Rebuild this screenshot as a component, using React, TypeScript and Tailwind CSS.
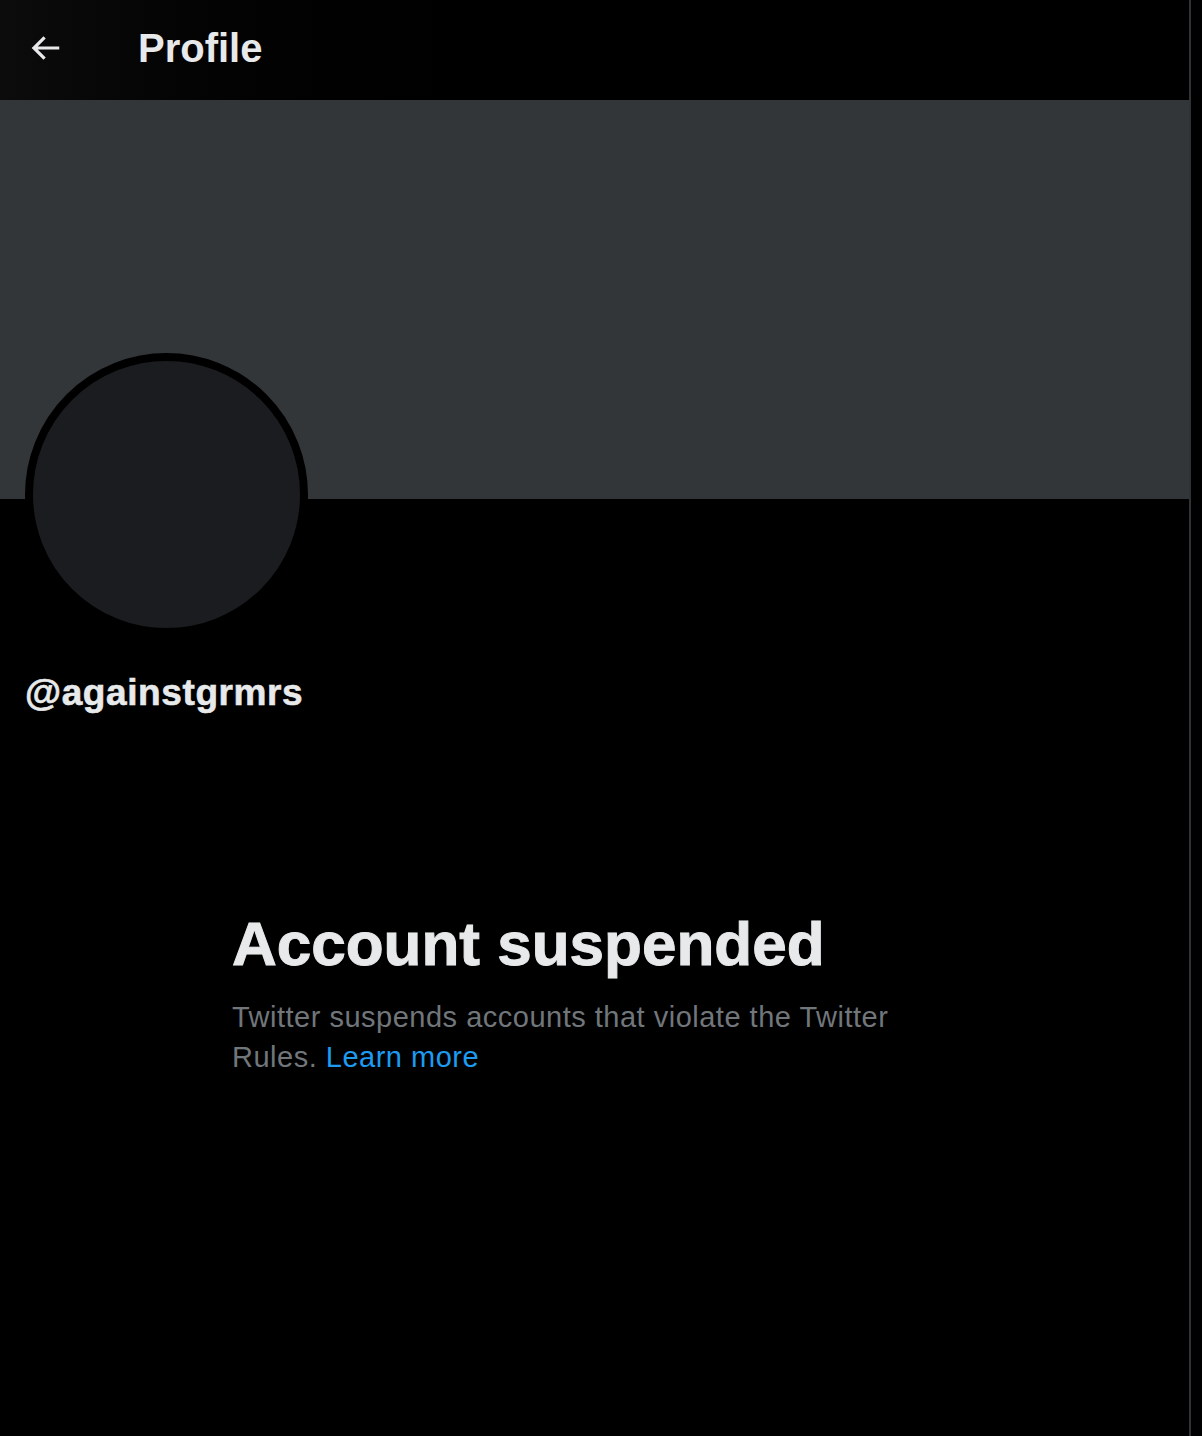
export default function App() {
  return (
    <div className="min-h-[1436px] bg-black font-['Liberation_Sans',Arial,sans-serif] flex">
      <div className="w-[1191px] min-h-[1436px] border-r-2 border-[#2f3336] flex flex-col">
        {/* Header */}
        <div className="h-[100px] flex items-center pb-1 bg-gradient-to-r from-[#0c0c0c] via-black to-black">
          <button className="ml-[26px] w-[38px] h-[38px] flex items-center justify-center text-[#e7e9ea]">
            <svg viewBox="0 0 24 24" className="w-[38px] h-[38px]" fill="currentColor">
              <path d="M7.414 13l5.043 5.04-1.414 1.42L3.586 12l7.457-7.46 1.414 1.42L7.414 11H21v2H7.414z" />
            </svg>
          </button>
          <h1 className="ml-[74px] text-[40px] font-bold text-[#e7e9ea] leading-none">Profile</h1>
        </div>

        {/* Banner */}
        <div className="h-[399px] bg-[#333639]" />

        {/* Avatar + handle */}
        <div className="px-[25px]">
          <div className="mt-[-146px] w-[283px] h-[283px] rounded-full border-[8px] border-black bg-[#1b1c1f]" />
          <div className="mt-[35px] text-[37px] leading-[44px] font-bold tracking-[0.6px] text-[#e7e9ea] [-webkit-text-stroke:0.6px_#e7e9ea]">
            @againstgrmrs
          </div>
        </div>

        {/* Suspended message */}
        <div className="pl-[232px] mt-[193px]">
          <h2 className="text-[62px] leading-[72px] font-bold text-[#e7e9ea] [-webkit-text-stroke:1px_#e7e9ea]">
            Account suspended
          </h2>
          <p className="mt-[17px] w-[690px] text-[29px] leading-[40px] tracking-[0.5px] text-[#71767b]">
            Twitter suspends accounts that violate the Twitter Rules. <span className="text-[#1d9bf0]">Learn more</span>
          </p>
        </div>
      </div>
    </div>
  );
}
